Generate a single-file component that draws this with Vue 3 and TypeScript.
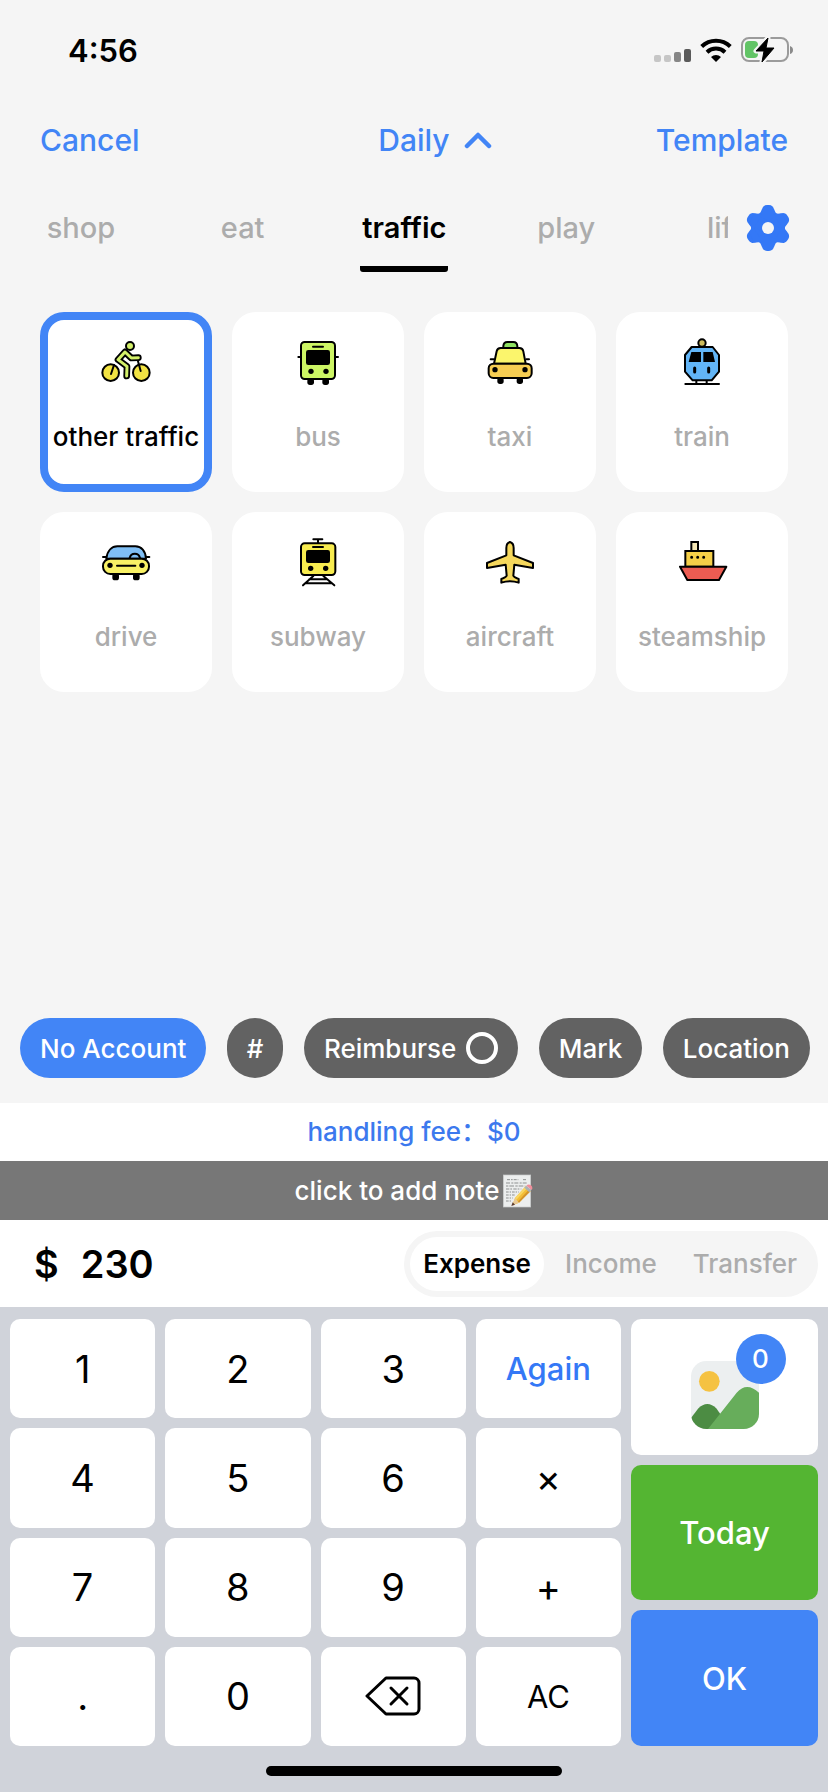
<script setup lang="ts">
import { ref } from 'vue'

interface Category {
  id: string
  label: string
}

const tabs: string[] = ['shop', 'eat', 'traffic', 'play', 'life']
const activeTab = ref('traffic')

const categories: Category[] = [
  { id: 'bike', label: 'other traffic' },
  { id: 'bus', label: 'bus' },
  { id: 'taxi', label: 'taxi' },
  { id: 'train', label: 'train' },
  { id: 'drive', label: 'drive' },
  { id: 'subway', label: 'subway' },
  { id: 'aircraft', label: 'aircraft' },
  { id: 'steamship', label: 'steamship' },
]
const activeCategory = ref('bike')

const kinds: string[] = ['Expense', 'Income', 'Transfer']
const activeKind = ref('Expense')

const keys: string[] = ['1', '2', '3', 'Again', '4', '5', '6', '×', '7', '8', '9', '+', '.', '0', 'del', 'AC']
const amount = ref('230')
const reimburse = ref(false)

function keyClass(key: string): string {
  if (key === 'Again') return 'again'
  if (key === 'AC') return 'clear'
  return ''
}

function press(key: string): void {
  if (key === 'AC') amount.value = '0'
  else if (key === 'del') amount.value = amount.value.slice(0, -1) || '0'
  else if (/^[0-9.]$/.test(key)) amount.value = amount.value === '0' && key !== '.' ? key : amount.value + key
}
</script>

<template>
  <div class="app">
    <header class="status">
      <span class="time">4:56</span>
      <div class="indicators">
        <svg width="38" height="26" viewBox="0 0 38 26" aria-hidden="true">
          <rect x="0" y="18" width="7" height="7" rx="2" fill="#c6c6c6" />
          <rect x="10" y="18" width="7" height="7" rx="2" fill="#c6c6c6" />
          <rect x="20" y="15" width="7" height="10" rx="2" fill="#868686" />
          <rect x="30" y="12" width="7" height="13" rx="2" fill="#5a5a5a" />
        </svg>
        <svg width="32" height="26" viewBox="0 0 32 26" aria-hidden="true">
          <g fill="none" stroke="#000" stroke-width="4">
            <path d="M1.700 9.500a20.500 20.500 0 0 1 28.600 0" />
            <path d="M7 15.200a13 13 0 0 1 18 0" />
          </g>
          <path d="M16 25l-5-5a7.400 7.400 0 0 1 10 0z" />
        </svg>
        <svg width="54" height="28" viewBox="0 0 54 28" aria-hidden="true">
          <rect x="2" y="2" width="46" height="23" rx="7" fill="none" stroke="#9b9b9b" stroke-width="2" />
          <rect x="5" y="5" width="13" height="17" rx="4" fill="#62c466" />
          <path d="M50 10q3 1 3 4t-3 4z" fill="#8b8b8b" />
          <path d="M28 2L16 15h8l-2 11 12-14h-8z" fill="#000" stroke="#f5f5f5" stroke-width="5" stroke-linejoin="round" />
          <path d="M28 2L16 15h8l-2 11 12-14h-8z" fill="#000" stroke="#000" stroke-width="1" stroke-linejoin="round" />
        </svg>
      </div>
    </header>

    <nav class="topbar">
      <button type="button" class="link">Cancel</button>
      <button type="button" class="link book">
        Daily
        <svg width="28" height="18" viewBox="0 0 28 18" aria-hidden="true">
          <path d="M3 15L14 4l11 11" fill="none" stroke="currentColor" stroke-width="4.500" stroke-linecap="round" stroke-linejoin="round" />
        </svg>
      </button>
      <button type="button" class="link end">Template</button>
    </nav>

    <div class="tabbar">
      <div class="tabs" role="tablist">
        <button
          v-for="tab in tabs"
          :key="tab"
          type="button"
          role="tab"
          class="tab"
          :class="{ active: tab === activeTab }"
          :aria-selected="tab === activeTab"
          @click="activeTab = tab"
        >
          <span>{{ tab }}</span>
        </button>
      </div>
      <button type="button" class="settings" aria-label="Settings">
        <svg width="46" height="46" viewBox="-23 -23 46 46" aria-hidden="true">
          <g fill="#3478f6">
            <circle r="17" />
            <rect v-for="a in [0, 60, 120]" :key="a" x="-6" y="-23" width="12" height="46" rx="5" :transform="`rotate(${a})`" />
            <path
              v-for="a in [0, 60, 120, 180, 240, 300]"
              :key="'w' + a"
              d="M-9 -12L-6 -19H6L9 -12z"
              :transform="`rotate(${a})`"
            />
          </g>
          <circle r="6" fill="#f5f5f5" />
        </svg>
      </button>
    </div>

    <main class="grid">
      <button
        v-for="c in categories"
        :key="c.id"
        type="button"
        class="card"
        :class="{ active: c.id === activeCategory }"
        :aria-pressed="c.id === activeCategory"
        @click="activeCategory = c.id"
      >
        <svg class="icon" viewBox="0 0 180 180" stroke="#000" stroke-width="6" stroke-linecap="round" stroke-linejoin="round" fill="none" aria-hidden="true">
          <g v-if="c.id === 'bike'">
            <circle cx="44" cy="122" r="25" fill="#f2e343" />
            <circle cx="136" cy="122" r="25" fill="#f2e343" />
            <path d="M54 99L45 126M126 88L134 117" />
            <g stroke-width="20">
              <path d="M87 60L66 83L93 103L92 132M87 60L106 78L127 77" />
            </g>
            <g stroke="#d3f06a" stroke-width="9">
              <path d="M87 60L66 83L93 103L92 132M87 60L106 78L127 77" />
            </g>
            <circle cx="102" cy="42" r="12" fill="#d3f06a" />
          </g>
          <g v-else-if="c.id === 'bus'">
            <rect x="58" y="138" width="20" height="21" rx="8" fill="#000" stroke="none" />
            <rect x="103" y="138" width="20" height="21" rx="8" fill="#000" stroke="none" />
            <rect x="39" y="30" width="102" height="111" rx="11" fill="#cdf564" />
            <path d="M75 44h30M31 75h6M143 75h7" />
            <rect x="54" y="54" width="72" height="45" rx="7" fill="#000" stroke="none" />
            <circle cx="69" cy="118" r="8" fill="#000" stroke="none" />
            <circle cx="114" cy="118" r="8" fill="#000" stroke="none" />
          </g>
          <g v-else-if="c.id === 'taxi'">
            <rect x="52" y="136" width="19" height="20" rx="8" fill="#000" stroke="none" />
            <rect x="110" y="136" width="19" height="20" rx="8" fill="#000" stroke="none" />
            <path d="M70 48v-6q1-12 12-12h18q11 0 12 12v6z" fill="#8fe262" />
            <path d="M42 95l8-37q2-10 12-10h56q10 0 12 10l7 37z" fill="#fbf56c" />
            <rect x="26" y="95" width="129" height="43" rx="14" fill="#f6cd52" />
            <path d="M32 82h9M139 82h8" />
            <circle cx="45" cy="113" r="8" fill="#000" stroke="none" />
            <circle cx="135" cy="113" r="8" fill="#000" stroke="none" />
          </g>
          <g v-else-if="c.id === 'train'">
            <circle cx="90" cy="33" r="11" fill="#cdbb5c" />
            <path d="M73 145v10M104 145v10M40 156h101" />
            <path d="M59 45h63l19 24v50l-22 26H62L39 119V69z" fill="#62b5f7" />
            <path d="M58 60h29v30H50zM94 60h28l7 30H94z" fill="#000" stroke="none" />
            <path d="M68 108v12M110 108v12" stroke-width="9" />
          </g>
          <g v-else-if="c.id === 'drive'">
            <rect x="49" y="124" width="20" height="21" rx="8" fill="#000" stroke="none" />
            <rect x="111" y="124" width="20" height="21" rx="8" fill="#000" stroke="none" />
            <path d="M31 80C34 55 48 43 64 43h54c18 0 31 14 32 37z" fill="#80bff5" />
            <path d="M101 78a16 17 0 0 1 31 0" />
            <rect x="21" y="80" width="138" height="46" rx="22" fill="#f8f165" />
            <path d="M21 75h8M152 75h8M63 101h55" />
            <circle cx="42" cy="100" r="8" fill="#000" stroke="none" />
            <circle cx="138" cy="100" r="8" fill="#000" stroke="none" />
          </g>
          <g v-else-if="c.id === 'subway'">
            <path d="M76 22h27M90 22v10" />
            <path d="M76 132L45 160M106 132L139 160M64 142h54M52 154h76" />
            <rect x="39" y="34" width="103" height="95" rx="11" fill="#f8ec4f" />
            <path d="M75 45h30" />
            <rect x="54" y="54" width="72" height="39" rx="7" fill="#000" stroke="none" />
            <circle cx="68" cy="109" r="8" fill="#000" stroke="none" />
            <circle cx="113" cy="109" r="8" fill="#000" stroke="none" />
          </g>
          <path
            v-else-if="c.id === 'aircraft'"
            d="M90 30C83 32 79 40 79 48V70L21 93V108L77 98L80 131Q78 136 64 141V152Q90 143 116 152V141Q102 136 100 131L103 98L159 108V93L101 70V48C101 40 97 32 90 30Z"
            fill="#f5d75c"
          />
          <g v-else stroke-linejoin="miter">
            <path d="M58 57V30h20v27z" fill="#f5e7b4" />
            <path d="M40 57h84v47H40z" fill="#f5cf48" />
            <path d="M24 104h139l-22 40H46z" fill="#ec5c52" stroke-linejoin="round" />
            <path d="M59 76h0M77 76h0M95 76h0" stroke-width="9" />
          </g>
        </svg>
        <span class="label">{{ c.label }}</span>
      </button>
    </main>

    <div class="chips">
      <button type="button" class="chip primary">No Account</button>
      <button type="button" class="chip">#</button>
      <label class="chip">
        Reimburse
        <input v-model="reimburse" type="checkbox" class="ring" />
      </label>
      <button type="button" class="chip">Mark</button>
      <button type="button" class="chip">Location</button>
    </div>

    <button type="button" class="strip fee">handling fee：$0</button>
    <button type="button" class="strip note">
      click to add note
      <svg width="30" height="34" viewBox="0 0 90 102" aria-hidden="true">
        <rect x="1" y="3" width="82" height="96" fill="#eceeee" stroke="#c9cccc" stroke-width="2" />
        <g fill="none" stroke="#8d9090" stroke-width="3">
          <path d="M12 17h34M60 17h12" stroke-dasharray="9 3 5 3" />
          <path d="M9 27h62" stroke-dasharray="12 4 6 3" />
          <path d="M9 36h58" stroke-dasharray="7 3 14 4" />
          <path d="M9 45h46" stroke-dasharray="10 3 5 4" />
          <path d="M9 54h38M9 63h28M9 72h20M9 81h16" stroke-dasharray="8 3 4 3" />
        </g>
        <path d="M28 94l8-22L68 37l15 14L48 86z" fill="#f3bd35" />
        <path d="M36 72L68 37l5 5L40 77z" fill="#f9d764" />
        <path d="M44 83l35-37 4 5-35 35z" fill="#d3932a" />
        <path d="M28 94l8-22 12 14z" fill="#e8c996" />
        <path d="M25 96l4-11 7 7z" fill="#5b3b2f" />
        <path d="M64 41l6-6 15 13-6 7z" fill="#a9b2b5" />
        <path d="M70 35q6-7 14-1 7 7 2 14z" fill="#ef8f9b" />
      </svg>
    </button>

    <div class="amount-row">
      <output class="amount"><span>$</span><span>{{ amount }}</span></output>
      <div class="segments" role="tablist">
        <button
          v-for="k in kinds"
          :key="k"
          type="button"
          role="tab"
          class="segment"
          :class="{ active: k === activeKind }"
          :aria-selected="k === activeKind"
          @click="activeKind = k"
        >
          {{ k }}
        </button>
      </div>
    </div>

    <footer class="pad">
      <div class="pad-body">
        <div class="keys">
          <button
            v-for="k in keys"
            :key="k"
            type="button"
            class="key"
            :class="keyClass(k)"
            :aria-label="k === 'del' ? 'Delete' : undefined"
            @click="press(k)"
          >
            <svg v-if="k === 'del'" width="56" height="40" viewBox="0 0 56 40" fill="none" stroke="#000" stroke-width="3" stroke-linecap="round" stroke-linejoin="round" aria-hidden="true">
              <path d="M21 2H49a5 5 0 0 1 5 5V33a5 5 0 0 1-5 5H21L2 20z" />
              <path d="M26 12l16 16M42 12L26 28" />
            </svg>
            <template v-else>{{ k }}</template>
          </button>
        </div>
        <div class="actions">
          <button type="button" class="key photo" aria-label="Photos">
            <span class="photo-box">
              <svg width="70" height="70" viewBox="0 0 210 210" aria-hidden="true">
                <defs>
                  <clipPath id="photo-clip"><rect x="3" y="3" width="204" height="204" rx="46" /></clipPath>
                </defs>
                <g clip-path="url(#photo-clip)">
                  <rect width="210" height="210" fill="#eceff0" />
                  <circle cx="58" cy="64" r="31" fill="#f5c242" />
                  <path d="M0 178L24 146Q52 118 80 146L110 190V210H0z" fill="#4c8c43" />
                  <path d="M54 207L140 98Q170 64 207 98V210H50z" fill="#67ad5b" />
                </g>
              </svg>
              <span class="badge">0</span>
            </span>
          </button>
          <button type="button" class="key today">Today</button>
          <button type="button" class="key ok">OK</button>
        </div>
      </div>
      <div class="home"></div>
    </footer>
  </div>
</template>

<style>
body {
  margin: 0;
  background: #f5f5f5;
}
</style>

<style scoped>
.app {
  box-sizing: border-box;
  display: flex;
  flex-direction: column;
  min-height: 100vh;
  background: #f5f5f5;
  color: #000;
  font-family: Inter, "Liberation Sans", "Noto Sans CJK SC", sans-serif;
  font-size: 26px;
  font-weight: 500;
}

button {
  margin: 0;
  padding: 0;
  border: 0;
  background: none;
  color: inherit;
  font: inherit;
  cursor: pointer;
}

.status {
  display: flex;
  align-items: center;
  justify-content: space-between;
  height: 100px;
  padding: 0 34px 0 68px;
}

.time {
  font-size: 31px;
  font-weight: 600;
}

.indicators {
  display: flex;
  align-items: center;
  gap: 8px;
}

.topbar {
  display: grid;
  grid-template-columns: 1fr auto 1fr;
  align-items: center;
  height: 80px;
  padding: 0 40px;
  color: #4285f6;
  font-size: 30px;
}

.link {
  justify-self: start;
}

/* The left padding balances the chevron so that the word stays centred. */
.book {
  display: flex;
  align-items: center;
  gap: 14px;
  padding-left: 42px;
}

.end {
  justify-self: end;
}

.tabbar {
  display: flex;
  height: 96px;
}

.tabs {
  display: flex;
  flex: 1;
  overflow: hidden;
}

.tab {
  flex: 0 0 calc(100% / 4.5);
  display: flex;
  justify-content: center;
  color: #acacac;
  font-size: 29px;
}

.tab span {
  box-sizing: border-box;
  height: 92px;
  padding: 0 2px;
  line-height: 96px;
  border-bottom: 6px solid transparent;
  border-radius: 3px;
}

.tab.active {
  color: #000;
  font-weight: 600;
}

.tab.active span {
  border-color: #000;
}

.settings {
  width: 100px;
  padding-right: 20px;
}

.settings svg {
  display: block;
  margin: 0 auto;
}

.grid {
  flex: 1;
  display: grid;
  grid-template-columns: repeat(4, 1fr);
  grid-auto-rows: 180px;
  align-content: start;
  gap: 20px;
  padding: 36px 40px;
}

.card {
  box-sizing: border-box;
  display: flex;
  flex-direction: column;
  align-items: center;
  gap: 28px;
  padding-top: 12px;
  border: 8px solid #fff;
  border-radius: 24px;
  background: #fff;
  color: #acacac;
  line-height: 34px;
  white-space: nowrap;
}

.card.active {
  border-color: #4285f6;
  color: #000;
}

.icon {
  width: 60px;
  height: 60px;
}

.chips {
  display: flex;
  justify-content: space-between;
  padding: 0 18px 25px 20px;
}

.chip {
  box-sizing: border-box;
  display: flex;
  align-items: center;
  gap: 10px;
  height: 60px;
  padding: 0 20px;
  border-radius: 30px;
  background: #626262;
  color: #fff;
  white-space: nowrap;
  cursor: pointer;
}

.chip.primary {
  background: #4285f6;
}

.ring {
  appearance: none;
  box-sizing: border-box;
  width: 32px;
  height: 32px;
  margin: 0;
  border: 4px solid #fff;
  border-radius: 50%;
}

.ring:checked {
  background: #4285f6;
}

.strip {
  display: flex;
  align-items: center;
  justify-content: center;
  gap: 4px;
  line-height: 32px;
}

.fee {
  height: 58px;
  background: #fff;
  color: #3c79ee;
}

.note {
  height: 59px;
  background: #777;
  color: #fff;
}

.amount-row {
  display: flex;
  align-items: center;
  justify-content: space-between;
  height: 87px;
  padding: 0 10px 0 34px;
  background: #fff;
}

.amount {
  display: flex;
  gap: 22px;
  font-size: 38px;
  font-weight: 600;
}

.segments {
  display: grid;
  grid-template-columns: repeat(3, 134px);
  padding: 6px;
  border-radius: 33px;
  background: #f5f5f5;
}

.segment {
  height: 54px;
  border-radius: 27px;
  color: #acacac;
}

.segment.active {
  background: #fff;
  color: #000;
  font-weight: 600;
}

.pad {
  padding: 12px 10px 16px;
  background: #d0d3da;
}

.pad-body {
  display: grid;
  grid-template-columns: 611fr 187fr;
  gap: 10px;
  height: 427px;
}

.keys,
.actions {
  display: grid;
  grid-auto-rows: 1fr;
  gap: 10px;
}

.keys {
  grid-template-columns: repeat(4, 1fr);
}

.key {
  display: flex;
  align-items: center;
  justify-content: center;
  border-radius: 10px;
  background: #fff;
  font-size: 38px;
  font-weight: 400;
}

.key.again {
  color: #3478f6;
  font-size: 31px;
  font-weight: 500;
}

.key.clear {
  font-size: 31px;
}

.key.today,
.key.ok {
  color: #fff;
  font-size: 31px;
  font-weight: 500;
}

.key.today {
  background: #54b532;
}

.key.ok {
  background: #4285f6;
}

.photo-box {
  position: relative;
  display: flex;
  padding-top: 16px;
}

.badge {
  position: absolute;
  top: -10px;
  right: -26px;
  width: 50px;
  height: 50px;
  border-radius: 50%;
  background: #4285f6;
  color: #fff;
  font-size: 26px;
  font-weight: 500;
  line-height: 50px;
}

.home {
  width: 296px;
  height: 10px;
  margin: 20px auto 0;
  border-radius: 5px;
  background: #000;
}
</style>
